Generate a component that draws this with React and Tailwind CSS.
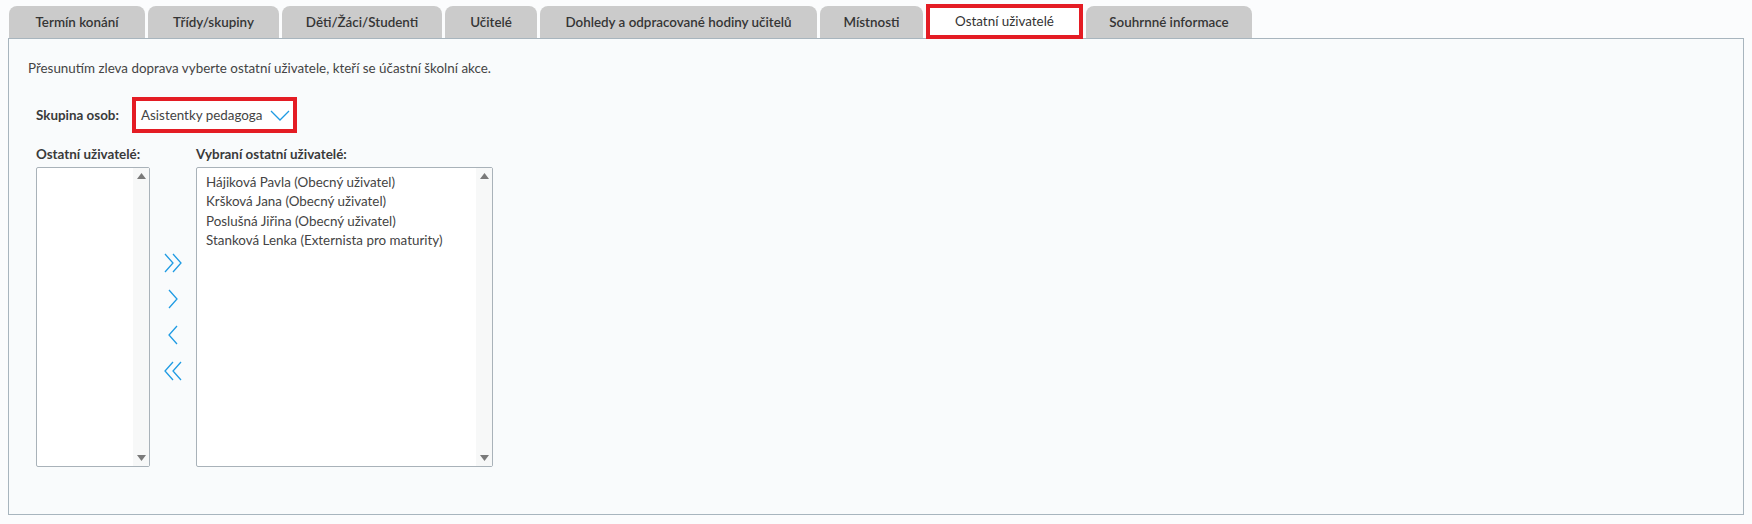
import React from 'react';

const tabs = [
    { label: 'Termín konání', w: 'w-[136px]' },
    { label: 'Třídy/skupiny', w: 'w-[131px]' },
    { label: 'Děti/Žáci/Studenti', w: 'w-[160px]' },
    { label: 'Učitelé', w: 'w-[92px]' },
    { label: 'Dohledy a odpracované hodiny učitelů', w: 'w-[277px]' },
    { label: 'Místnosti', w: 'w-[103px]' },
    { label: 'Ostatní uživatelé', w: 'w-[157px]', active: true },
    { label: 'Souhrnné informace', w: 'w-[166px]' },
];

const selected = [
    'Hájiková Pavla (Obecný uživatel)',
    'Kršková Jana (Obecný uživatel)',
    'Poslušná Jiřina (Obecný uživatel)',
    'Stanková Lenka (Externista pro maturity)',
];

function Chevron({ dir = 'right', double = false }) {
    // thin tall chevrons, like the reference
    const one = dir === 'right' ? 'M1 1 L9 10 L1 19' : 'M9 1 L1 10 L9 19';
    return (
        <svg width={double ? 19 : 10} height="20" viewBox={double ? '0 0 19 20' : '0 0 10 20'} fill="none" stroke="#1f9be3" strokeWidth="1.3">
            <path d={one} />
            {double && <path d={one} transform="translate(8 0)" />}
        </svg>
    );
}

function ListBox({ items = [], width }) {
    return (
        <div className={`${width} h-[300px] bg-white border border-[#a9b2b9] rounded-[2px] flex`}>
            <div className="flex-1 pt-[5px] pl-[9px] text-[13.4px] leading-[19.3px] text-[#444]">
                {items.map((it, i) => (
                    <div key={i} className="whitespace-nowrap">{it}</div>
                ))}
            </div>
            <div className="w-[16px] bg-[#f7f8f8] flex flex-col justify-between items-center py-[5px]">
                <svg width="9" height="6" viewBox="0 0 9 6"><path d="M0 6 L4.5 0 L9 6 Z" fill="#7a7a7a" /></svg>
                <svg width="9" height="6" viewBox="0 0 9 6"><path d="M0 0 L9 0 L4.5 6 Z" fill="#7a7a7a" /></svg>
            </div>
        </div>
    );
}

export default function App() {
    return (
        <div className="w-[1752px] h-[524px] bg-[#fbfcfd] pt-[4px] pl-[8px] pr-[8px] font-['Lato',sans-serif]">
            {/* tab strip */}
            <div className="flex gap-[3px] h-[35px] ml-[1px]">
                {tabs.map((t) =>
                    t.active ? (
                        <div key={t.label} className={`${t.w} h-[35px] relative z-10 bg-white border-4 border-[#e41c24] flex items-center justify-center text-[13.4px] text-[#333]`}>
                            {t.label}
                        </div>
                    ) : (
                        <div key={t.label} className={`${t.w} h-[32px] mt-[2px] bg-[#cbcbcb] rounded-t-[8px] flex items-center justify-center text-[13.4px] font-semibold text-[#353535]`}>
                            {t.label}
                        </div>
                    )
                )}
            </div>

            {/* panel */}
            <div className="-mt-[1px] h-[477px] border border-[#a8b5be] bg-[#f9fbfc] pl-[19px] pt-[20px]">
                <p className="text-[13.4px] text-[#444] leading-[18px]">
                    Přesunutím zleva doprava vyberte ostatní uživatele, kteří se účastní školní akce.
                </p>

                <div className="pl-[8px]">
                    <div className="flex items-center mt-[20px] h-[36px]">
                        <span className="text-[13.4px] font-bold text-[#3a3a3a] w-[96px]">Skupina osob:</span>
                        <div className="w-[165px] h-[36px] border-4 border-[#e41c24] bg-white flex items-center pl-[5px] gap-[8px]">
                            <span className="text-[13.4px] text-[#444]">Asistentky pedagoga</span>
                            <svg width="20" height="11" viewBox="0 0 20 11" fill="none" stroke="#1f9be3" strokeWidth="1.3">
                                <path d="M1 1 L10 10 L19 1" />
                            </svg>
                        </div>
                    </div>

                    <div className="flex mt-[12px]">
                        <div className="flex flex-col">
                            <span className="text-[13.4px] font-bold text-[#3a3a3a] leading-[18px] mb-[4px]">Ostatní uživatelé:</span>
                            <ListBox width="w-[114px]" />
                        </div>
                        <div className="w-[46px] flex flex-col items-center pt-[108px] gap-[16px]">
                            <Chevron dir="right" double />
                            <Chevron dir="right" />
                            <Chevron dir="left" />
                            <Chevron dir="left" double />
                        </div>
                        <div className="flex flex-col">
                            <span className="text-[13.4px] font-bold text-[#3a3a3a] leading-[18px] mb-[4px]">Vybraní ostatní uživatelé:</span>
                            <ListBox width="w-[297px]" items={selected} />
                        </div>
                    </div>
                </div>
            </div>
        </div>
    );
}
